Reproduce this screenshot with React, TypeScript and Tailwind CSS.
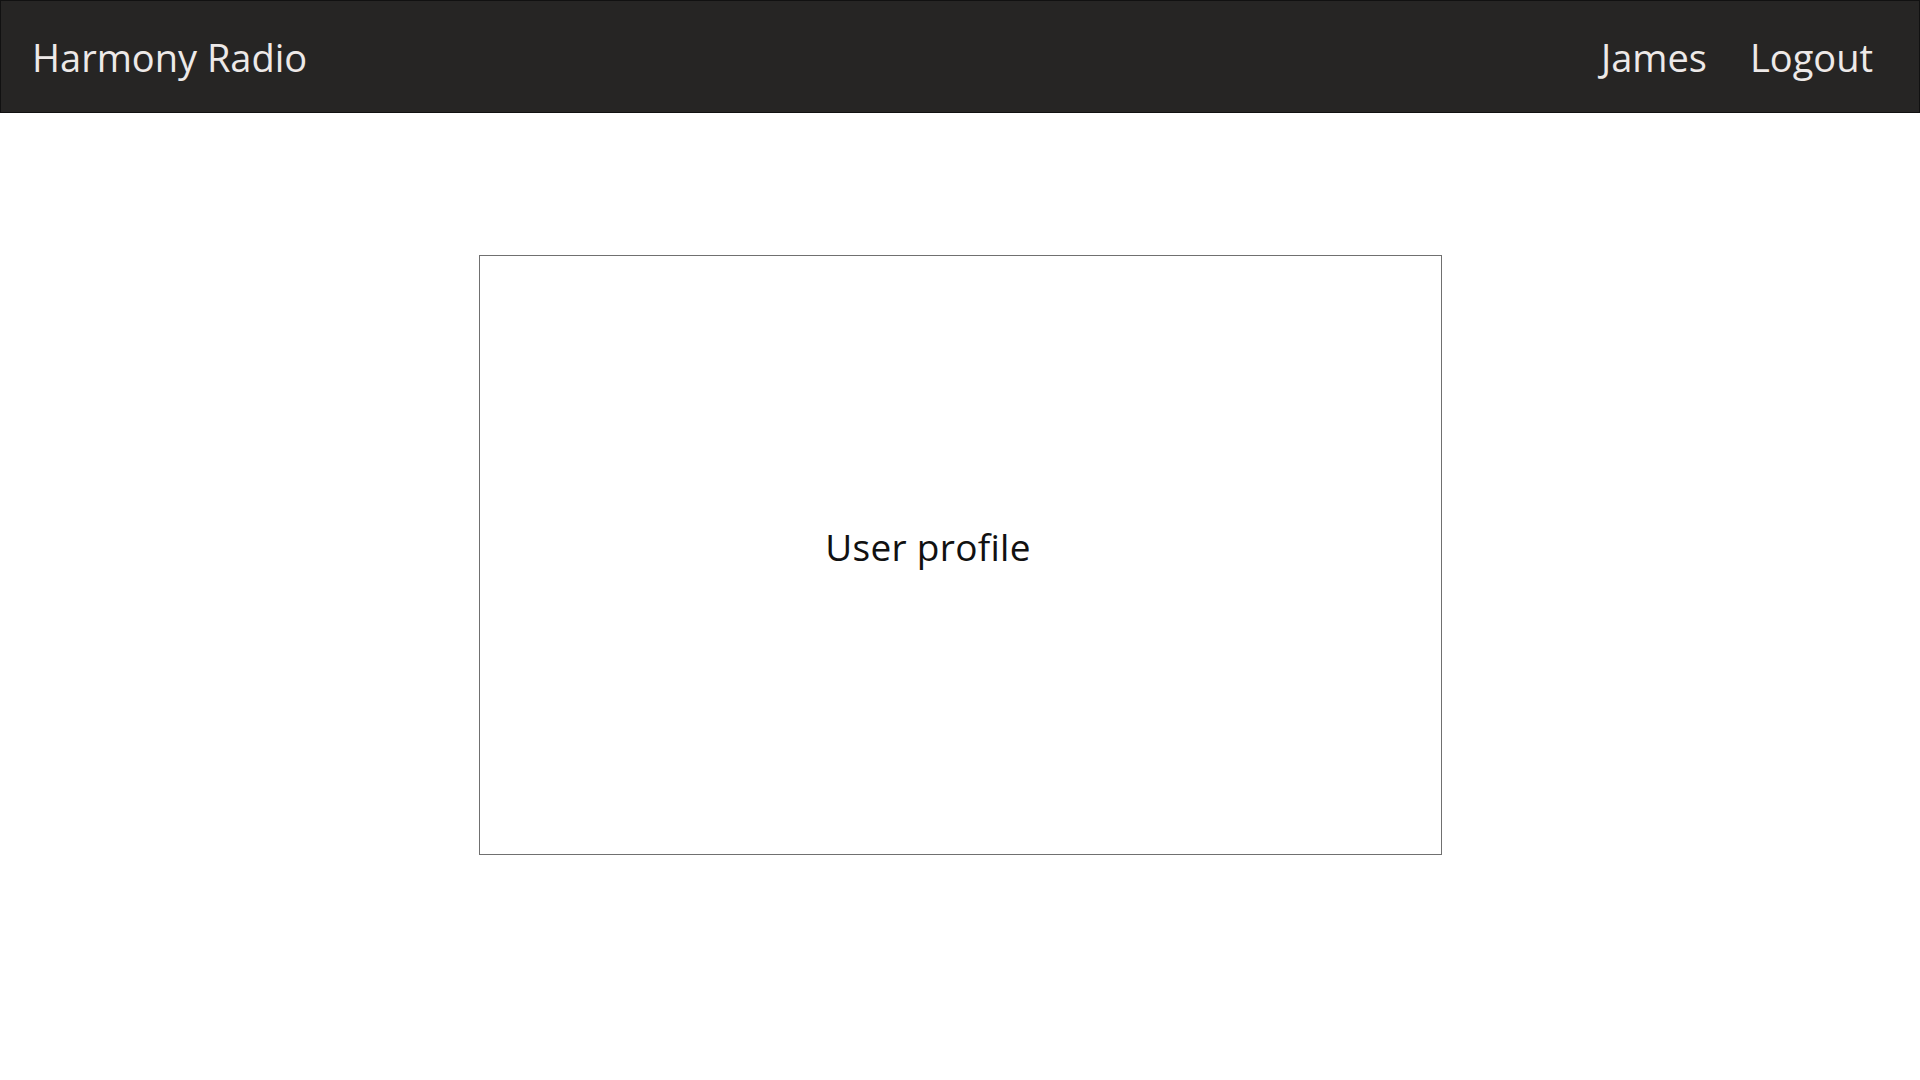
export default function App() {
  return (
    <div className="min-h-[1080px] w-full bg-white" style={{ fontFamily: '"Open Sans", "Noto Sans", sans-serif' }}>
      <header className="flex h-[113px] items-center justify-between border border-[#111111] bg-[#262524] pl-[31px] pr-[46px] text-[#ede9e8]">
        <div className="text-[38px] leading-none tracking-[0px]">Harmony Radio</div>
        <nav className="flex items-center gap-[43px] text-[38px] leading-none tracking-[0px]">
          <span>James</span>
          <span>Logout</span>
        </nav>
      </header>
      <main className="flex justify-center pt-[142px]">
        <div className="flex h-[600px] w-[963px] items-center justify-center border border-[#707070] pb-[18px] pr-[64px]">
          <span className="text-[37px] leading-none tracking-[0.3px] text-[#111111]">User profile</span>
        </div>
      </main>
    </div>
  );
}
